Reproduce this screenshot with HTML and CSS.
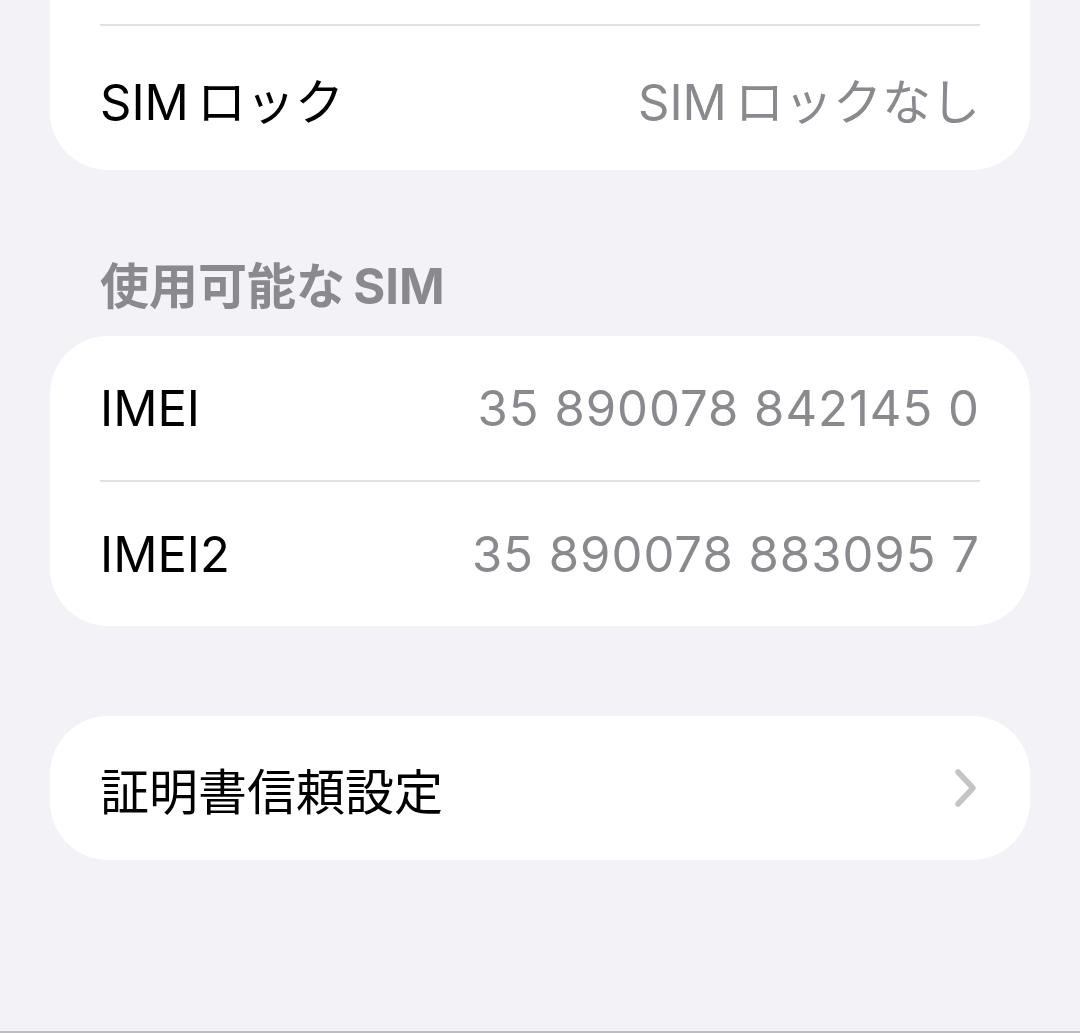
FILE: index.html
```html
<!DOCTYPE html>
<html lang="ja">
<head>
    <meta charset="UTF-8">
    <meta name="viewport" content="width=device-width, initial-scale=1.0">
    <title>情報</title>
    <link rel="stylesheet" href="styles.css">
</head>
<body>
    <div class="page">
        <div class="group">
            <div class="row row-hidden"></div>
            <div class="row">
                <span class="label">SIM&#8198;ロック</span>
                <span class="value">SIM&#8198;ロックなし</span>
            </div>
        </div>

        <h2 class="section-title">使用可能な&#8198;SIM</h2>
        <div class="group">
            <div class="row">
                <span class="label">IMEI</span>
                <span class="value value-num">35 890078 842145 0</span>
            </div>
            <div class="row">
                <span class="label">IMEI2</span>
                <span class="value value-num">35 890078 883095 7</span>
            </div>
        </div>

        <div class="group group-spaced">
            <div class="row">
                <span class="label">証明書信頼設定</span>
                <svg class="chevron" width="24" height="40" viewBox="0 0 24 40">
                    <path d="M4 4 L19 20 L4 36" fill="none" stroke="#c4c4c7" stroke-width="5.5" stroke-linecap="round" stroke-linejoin="round"/>
                </svg>
            </div>
        </div>
    </div>
    <div class="bottom-edge"></div>
</body>
</html>
```

FILE: styles.css
```css
body {
    margin: 0;
    padding: 0;
    background-color: #f2f2f7;
    font-family: Inter, "Noto Sans CJK JP", sans-serif;
    overflow: hidden;
}
.page {
    margin-top: -120px;
    padding: 0 50px;
}
.group {
    background-color: #fff;
    border-radius: 58px;
    overflow: hidden;
}
.group-spaced {
    margin-top: 90px;
}
.row {
    display: flex;
    align-items: center;
    justify-content: space-between;
    height: 144px;
    margin: 0 50px;
    font-size: 49px;
}
.row + .row {
    border-top: 2px solid #e1e1e3;
}
.label {
    color: #000;
}
.value {
    color: #8a8a8e;
}
.value-num {
    letter-spacing: 1px;
}
.chevron {
    display: block;
    margin-right: 2px;
}
.section-title {
    margin: 89px 0 21px 50px;
    height: 56px;
    line-height: 56px;
    font-size: 49px;
    font-weight: 700;
    color: #8a8a8e;
}
.bottom-edge {
    margin-top: 171px;
    height: 2px;
    background-color: #bdbdc0;
}
```
